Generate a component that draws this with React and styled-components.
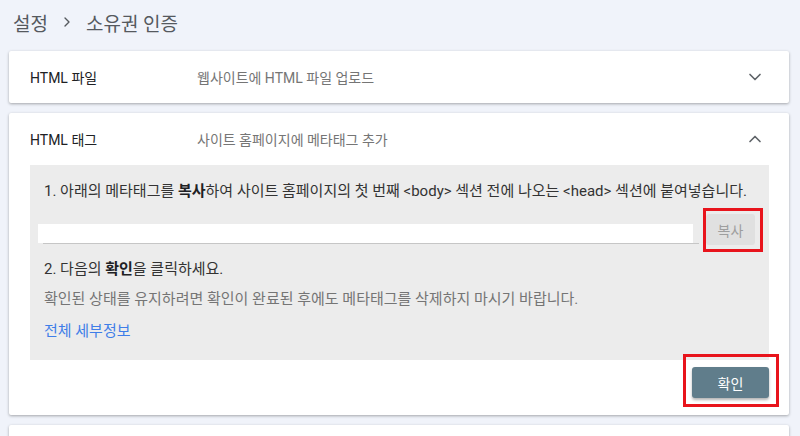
import React from 'react';
import styled, { createGlobalStyle } from 'styled-components';
import { ChevronDown, ChevronUp, ChevronRight } from 'lucide-react';

const GlobalStyle = createGlobalStyle`
  body {
    margin: 0;
    background: #f0f3fa;
    font-family: Roboto, "Noto Sans CJK KR", sans-serif;
    color: #202124;
  }
`;

const Page = styled.div`
  padding: 10px 11px 0 9px;
  height: 426px;
  overflow: hidden;
`;

const Breadcrumb = styled.div`
  display: flex;
  align-items: center;
  padding-left: 4px;
  height: 24px;
  margin-bottom: 17px;
  font-size: 19px;
  color: #55595e;
  gap: 11px;
`;

const Card = styled.div`
  background: #fff;
  border-radius: 2px;
  box-shadow: 0 1px 3px rgba(0, 0, 0, 0.32);
  margin-bottom: 10px;
`;

const CardHeader = styled.div`
  display: flex;
  align-items: center;
  height: 52px;
  padding: 0 24px 0 21px;
  font-size: 14px;
`;

const CardTitle = styled.div`
  width: 167px;
  color: #202124;
`;

const CardDesc = styled.div`
  flex: 1;
  color: #757575;
`;

const Panel = styled.div`
  margin: 0 20px 0 21px;
  background: #ececec;
  padding: 16px 6px 19px 14px;
  font-size: 15px;
  line-height: 20px;
`;

const Line = styled.div`
  margin-top: ${p => p.$mt || 0}px;
  color: ${p => (p.$muted ? '#757575' : '#333')};
  b {
    color: #202124;
    font-weight: 700;
  }
`;

const CopyRow = styled.div`
  display: flex;
  align-items: flex-start;
  margin-top: 7px;
`;

const Field = styled.div`
  flex: 1;
  margin: 16px 0 0 -1px;
  border-bottom: 1px solid #c6c6c6;
`;

const FieldBox = styled.div`
  height: 19px;
  background: #fff;
  margin: 0 6px 0 -5px;
`;

const Highlight = styled.div`
  border: 3px solid #e8141c;
  padding: ${p => p.$pad};
  margin: ${p => p.$margin || 0};
`;

const CopyButton = styled.button`
  width: 49px;
  height: 31px;
  border: none;
  border-radius: 3px;
  background: #e0e0e0;
  color: #9e9e9e;
  font-family: Roboto, "Noto Sans CJK KR", sans-serif;
  font-size: 14px;
`;

const Link = styled.a`
  display: block;
  margin-top: 12px;
  color: #3f7ee8;
  text-decoration: none;
`;

const Footer = styled.div`
  display: flex;
  justify-content: flex-end;
  padding: 0 10px 8px 0;
`;

const ConfirmButton = styled.button`
  width: 77px;
  height: 31px;
  border: none;
  border-radius: 3px;
  background: #607d8b;
  color: #fff;
  font-family: Roboto, "Noto Sans CJK KR", sans-serif;
  font-size: 14px;
  box-shadow: 0 2px 3px rgba(0, 0, 0, 0.3);
`;

const EmptyCard = styled(Card)`
  height: 40px;
`;

export default function App() {
  return (
    <>
      <GlobalStyle />
      <Page>
        <Breadcrumb>
          <span>설정</span>
          <ChevronRight size={16} strokeWidth={2} />
          <span>소유권 인증</span>
        </Breadcrumb>

        <Card>
          <CardHeader>
            <CardTitle>HTML 파일</CardTitle>
            <CardDesc>웹사이트에 HTML 파일 업로드</CardDesc>
            <ChevronDown size={20} color="#5f6368" strokeWidth={2} />
          </CardHeader>
        </Card>

        <Card>
          <CardHeader>
            <CardTitle>HTML 태그</CardTitle>
            <CardDesc>사이트 홈페이지에 메타태그 추가</CardDesc>
            <ChevronUp size={20} color="#5f6368" strokeWidth={2} />
          </CardHeader>
          <Panel>
            <Line>
              1. 아래의 메타태그를 <b>복사</b>하여 사이트 홈페이지의 첫 번째 &lt;body&gt; 섹션 전에 나오는 &lt;head&gt; 섹션에 붙여넣습니다.
            </Line>
            <CopyRow>
              <Field>
                <FieldBox />
              </Field>
              <Highlight $pad="3px 5px 4px 0" $margin="0 0 0 4px">
                <CopyButton>복사</CopyButton>
              </Highlight>
            </CopyRow>
            <Line $mt={7}>
              2. 다음의 <b>확인</b>을 클릭하세요.
            </Line>
            <Line $mt={10} $muted>
              확인된 상태를 유지하려면 확인이 완료된 후에도 메타태그를 삭제하지 마시기 바랍니다.
            </Line>
            <Link href="#">전체 세부정보</Link>
          </Panel>
          <Footer>
            <Highlight $pad="10px 7px 6px 6px" $margin="-6px 0 0 0">
              <ConfirmButton>확인</ConfirmButton>
            </Highlight>
          </Footer>
        </Card>

        <EmptyCard />
      </Page>
    </>
  );
}
